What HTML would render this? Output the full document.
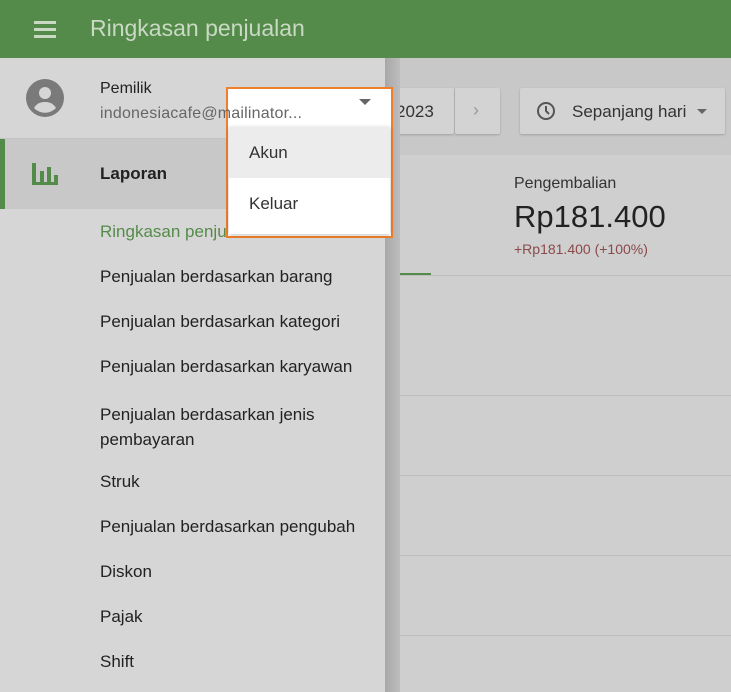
<!DOCTYPE html><html><head><style>
*{margin:0;padding:0;box-sizing:border-box}
body{width:731px;height:692px;overflow:hidden;font-family:"Liberation Sans",sans-serif;background:#c6c6c6;position:relative}
.hdr{position:absolute;left:0;top:0;width:731px;height:58px;background:#558b4a;z-index:5}
.hdr .t{position:absolute;left:90px;top:15px;font-size:23px;color:#c9d9c4}
.ham{position:absolute;left:34px;width:22px;height:2.5px;background:#c9d9c4}
.main{position:absolute;left:400px;top:58px;right:0;bottom:0;background:#c8c8c8}
.btn{position:absolute;background:#d3d3d3;box-shadow:0 1px 2px rgba(0,0,0,.2);border-radius:2px}
.card{position:absolute;left:400px;top:155px;right:0;bottom:0;background:#cfcfcf}
.line{position:absolute;left:400px;right:0;height:1px;background:#bdbdbd}
.drawer{position:absolute;left:0;top:58px;width:385px;bottom:0;background:#d6d6d6;z-index:3}
.shadow{position:absolute;left:385px;top:58px;width:15px;bottom:0;background:linear-gradient(90deg,#a8a8a8,#bdbdbd);z-index:3}
.it{position:absolute;left:100px;font-size:17px;color:#222}
</style></head><body>
<div class="hdr"><div class="ham" style="top:21px"></div><div class="ham" style="top:28px"></div><div class="ham" style="top:35px"></div><div class="t">Ringkasan penjualan</div></div>
<div class="main"></div>
<div class="btn" style="left:380px;top:88px;width:74px;height:46px;font-size:17px;color:#333;padding:14px 0 0 16px">2023</div>
<div class="btn" style="left:455px;top:88px;width:45px;height:46px;color:#999;font-size:18px;padding:12px 0 0 18px">›</div>
<div class="btn" style="left:520px;top:88px;width:205px;height:46px"><svg style="position:absolute;left:16px;top:13px" width="20" height="20" viewBox="0 0 20 20"><circle cx="10" cy="10" r="8" fill="none" stroke="#555" stroke-width="2"/><path d="M10 5v5l3 3" fill="none" stroke="#555" stroke-width="2"/></svg><span style="position:absolute;left:52px;top:14px;font-size:17px;color:#333">Sepanjang hari</span><span style="position:absolute;left:177px;top:21px;border:5px solid transparent;border-top-color:#666"></span></div>
<div class="card"></div>
<div style="position:absolute;left:514px;top:175px;font-size:16px;color:#333">Pengembalian</div>
<div style="position:absolute;left:514px;top:199px;font-size:31px;color:#222">Rp181.400</div>
<div style="position:absolute;left:514px;top:241px;font-size:14px;color:#8a4a4a">+Rp181.400 (+100%)</div>
<div class="line" style="top:275px"></div><div style="position:absolute;left:400px;top:273px;width:31px;height:2px;background:#558b4a"></div>
<div class="line" style="top:395px"></div><div class="line" style="top:475px"></div><div class="line" style="top:555px"></div><div class="line" style="top:635px"></div>
<div class="shadow"></div>
<div class="drawer">
<svg style="position:absolute;left:26px;top:21px" width="38" height="38" viewBox="0 0 38 38"><circle cx="19" cy="19" r="19" fill="#7a7a7a"/><circle cx="19" cy="14" r="6" fill="#d6d6d6"/><path d="M8 29c3-5 7-6 11-6s8 1 11 6a15 15 0 0 1-22 0z" fill="#d6d6d6"/></svg>
<div style="position:absolute;left:100px;top:22px;font-size:16px;color:#222">Pemilik</div>
<div style="position:absolute;left:0;top:80px;width:385px;height:1px;background:#c2c2c2"></div>
<div style="position:absolute;left:0;top:81px;width:385px;height:70px;background:#c8c8c8;border-left:5px solid #558b4a"></div>
<svg style="position:absolute;left:32px;top:105px" width="26" height="22" viewBox="0 0 26 22"><path d="M0 0h4v22H0zM8 8h4v14H8zM15 4h4v18h-4zM22 12h4v10h-4zM0 19h26v3H0z" fill="#558b4a"/></svg>
<div class="it" style="top:106px;font-weight:bold">Laporan</div>
<div class="it" style="top:164px;color:#558b4a">Ringkasan penjualan</div>
<div class="it" style="top:209px">Penjualan berdasarkan barang</div>
<div class="it" style="top:254px">Penjualan berdasarkan kategori</div>
<div class="it" style="top:299px">Penjualan berdasarkan karyawan</div>
<div class="it" style="top:344px;line-height:25px">Penjualan berdasarkan jenis<br>pembayaran</div>
<div class="it" style="top:414px">Struk</div>
<div class="it" style="top:459px">Penjualan berdasarkan pengubah</div>
<div class="it" style="top:504px">Diskon</div>
<div class="it" style="top:549px">Pajak</div>
<div class="it" style="top:594px">Shift</div>
</div>
<div style="position:absolute;left:226px;top:87px;width:167px;height:151px;border:2px solid #f07f2c;background:#fff;z-index:6">
<span style="position:absolute;left:131px;top:10px;border:6px solid transparent;border-top-color:#666"></span>
<div style="position:absolute;left:1px;top:38px;width:161px;height:107px;box-shadow:0 1px 4px rgba(0,0,0,.25);background:#fff">
<div style="height:51px;background:#ececec;font-size:17px;color:#333;padding:16px 0 0 20px">Akun</div>
<div style="font-size:17px;color:#333;padding:16px 0 0 20px">Keluar</div></div></div>
<div style="position:absolute;left:100px;top:105px;font-size:16px;color:#666;z-index:7;white-space:nowrap;letter-spacing:0.2px">indonesiacafe@mailinator...</div>
</body></html>
